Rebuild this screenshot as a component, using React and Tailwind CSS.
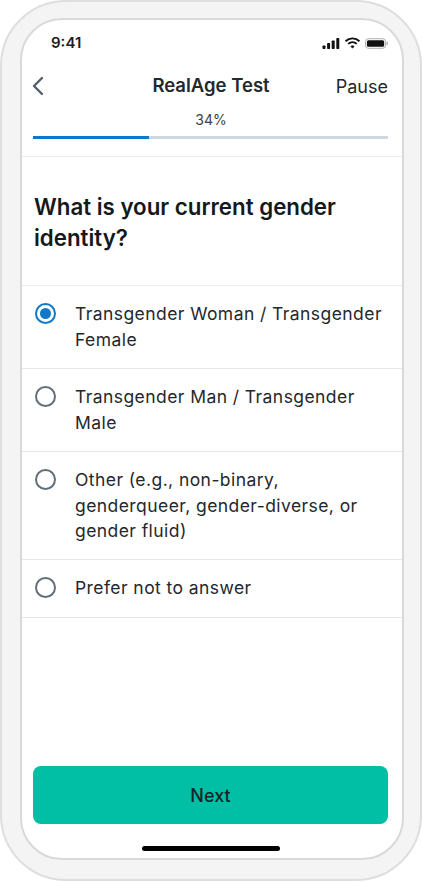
import React from 'react';

const options = [
    { label: 'Transgender Woman / Transgender Female', height: 'h-[83px]', selected: true },
    { label: 'Transgender Man / Transgender Male', height: 'h-[83px]' },
    { label: 'Other (e.g., non-binary, genderqueer, gender-diverse, or gender fluid)', height: 'h-[108px]' },
    { label: 'Prefer not to answer', height: 'h-[58px]' },
];

const StatusIcons = () => (
    <div className="flex items-center gap-[4px]">
        <svg width="18" height="11" viewBox="0 0 17 11" fill="#111">
            <rect x="0" y="7.5" width="3" height="3.5" rx="0.7" />
            <rect x="4.6" y="5" width="3" height="6" rx="0.7" />
            <rect x="9.2" y="2.5" width="3" height="8.5" rx="0.7" />
            <rect x="13.8" y="0" width="3" height="11" rx="0.7" />
        </svg>
        <svg width="17" height="12" viewBox="0 0 16 12" fill="none" stroke="#111" strokeWidth="1.9">
            <path d="M1 4.2 C5 0.4 11 0.4 15 4.2" />
            <path d="M3.7 6.9 C6.2 4.6 9.8 4.6 12.3 6.9" />
            <path d="M6.3 9.4 C7.3 8.5 8.7 8.5 9.7 9.4 L8 11.2 Z" fill="#111" strokeWidth="0.6" />
        </svg>
        <svg width="23" height="11" viewBox="0 0 24 11">
            <rect x="0.5" y="0.5" width="21" height="10" rx="3" fill="none" stroke="#aaa" />
            <rect x="2" y="2" width="18" height="7" rx="1.6" fill="#111" />
            <rect x="22.5" y="3.8" width="1.3" height="3.4" rx="0.6" fill="#aaa" />
        </svg>
    </div>
);

const Radio = ({ selected }) => (
    <div
        className={`mt-[1px] flex h-[21px] w-[21px] shrink-0 items-center justify-center rounded-full border-2 ${
            selected ? 'border-[#1078c8]' : 'border-[#5f6f7b]'
        }`}
    >
        {selected && <div className="h-[11px] w-[11px] rounded-full bg-[#1078c8]" />}
    </div>
);

export default function App() {
    return (
        <div className="h-[882px] w-[422px] bg-white font-['Inter',sans-serif] text-[#23282d]">
            <div className="h-[881px] w-[422px] rounded-[66px] border-2 border-[#dedede] bg-[#f4f4f4] pt-[16px] pr-[16px] pl-[18px]">
                <div className="flex h-[842px] flex-col rounded-[42px] border-2 border-[#d9d9d9] bg-white">
                    <div className="flex h-[34px] items-end justify-between pr-[14px] pl-[29px]">
                        <span className="text-[15px] font-semibold text-[#1c1c1c]">9:41</span>
                        <div className="pb-[5px]">
                            <StatusIcons />
                        </div>
                    </div>

                    <div className="relative mt-[18px] flex h-[28px] items-center justify-between pr-[14px] pl-[9px]">
                        <svg width="14" height="20" viewBox="0 0 14 20" fill="none" stroke="#50606c" strokeWidth="2.4" strokeLinecap="round" strokeLinejoin="round">
                            <path d="M11 2 L3 10 L11 18" />
                        </svg>
                        <span className="absolute left-0 w-full pr-[2px] text-center text-[18.5px] font-semibold">RealAge Test</span>
                        <span className="text-[18px]">Pause</span>
                    </div>

                    <div className="mt-[10px] pr-[2px] text-center text-[14px] leading-[20px] text-[#3a4147]">34%</div>
                    <div className="mt-[6px] mr-[14px] ml-[11px] h-[3px] bg-[#cfd8de]">
                        <div className="h-full w-[116px] bg-[#1078c8]" />
                    </div>

                    <div className="mt-[17px] flex h-[130px] items-center border-y border-[#ececec] px-[12px] pt-[2px]">
                        <h1 className="text-[22.3px] leading-[31px] font-semibold text-[#15191c]">
                            What is your current gender identity?
                        </h1>
                    </div>

                    {options.map((option) => (
                        <div
                            key={option.label}
                            className={`flex gap-[19px] border-b border-[#e8e8e8] pt-[16px] pr-[14px] pl-[13px] ${option.height}`}
                        >
                            <Radio selected={option.selected} />
                            <span className="-mt-[1px] text-[17.5px] leading-[25.5px] tracking-[0.43px]">{option.label}</span>
                        </div>
                    ))}

                    <div className="flex-1" />

                    <button className="mr-[14px] ml-[11px] h-[58px] rounded-[8px] bg-[#00bfa5] text-[18px] font-medium text-[#15262a]">
                        Next
                    </button>
                    <div className="mt-[22px] mb-[7px] ml-[120px] h-[5px] w-[138px] rounded-full bg-black" />
                </div>
            </div>
        </div>
    );
}
